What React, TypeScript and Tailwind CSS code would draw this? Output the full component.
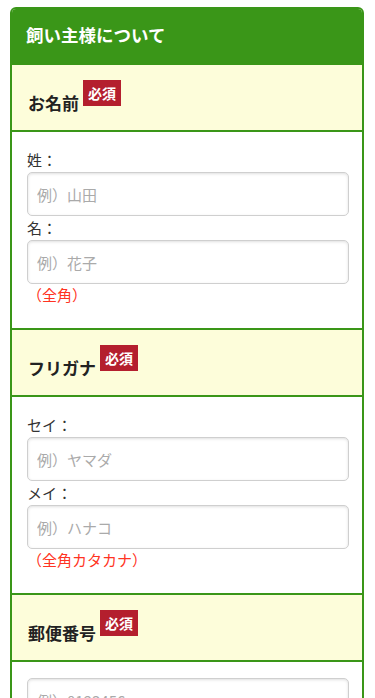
import React from "react";

const GREEN = "border-[#3a9618]";

function Badge() {
  return (
    <span className="ml-[4px] inline-block bg-[#b41f2e] px-[5px] py-[4px] text-[14px] font-bold leading-[18px] text-white">
      必須
    </span>
  );
}

function SectionHead({ title }: { title: string }) {
  return (
    <div className={`border-b-2 ${GREEN} bg-[#fdfdda] px-[16px] pb-[15px] pt-[15px]`}>
      <div className="flex items-start">
        <span className="mt-[11px] text-[17px] font-bold leading-[24px] text-[#222]">{title}</span>
        <Badge />
      </div>
    </div>
  );
}

function Field({ label, placeholder }: { label?: string; placeholder: string }) {
  return (
    <div>
      {label && <div className="text-[15px] leading-[24px] text-[#333]">{label}</div>}
      <input
        type="text"
        placeholder={placeholder}
        className="block h-[44px] w-full rounded-[5px] border border-[#cfcfcf] bg-white px-[9px] text-[15px] text-[#333] shadow-[inset_0_1px_3px_rgba(0,0,0,0.13)] outline-none placeholder:text-[#aaaaaa]"
      />
    </div>
  );
}

function Note({ text }: { text: string }) {
  return <div className="text-[15px] leading-[22px] text-[#ff3322]">{text}</div>;
}

export default function App() {
  return (
    <div className="min-h-[698px] bg-white pb-[20px] pt-[7px] font-['Noto_Sans_CJK_JP',sans-serif]">
      <div className={`ml-[10px] mr-[11px] overflow-hidden rounded-t-[6px] border-2 ${GREEN}`}>
        <div className="bg-[#3a9618] px-[14px] pb-[18px] pt-[14px] text-[17.5px] font-bold leading-[24px] text-white">
          飼い主様について
        </div>

        <SectionHead title="お名前" />
        <div className={`border-b-2 ${GREEN} bg-white pb-[22px] pl-[15px] pr-[13px] pt-[16px]`}>
          <Field label="姓：" placeholder="例）山田" />
          <Field label="名：" placeholder="例）花子" />
          <Note text="（全角）" />
        </div>

        <SectionHead title="フリガナ" />
        <div className={`border-b-2 ${GREEN} bg-white pb-[22px] pl-[15px] pr-[13px] pt-[16px]`}>
          <Field label="セイ：" placeholder="例）ヤマダ" />
          <Field label="メイ：" placeholder="例）ハナコ" />
          <Note text="（全角カタカナ）" />
        </div>

        <SectionHead title="郵便番号" />
        <div className="bg-white pb-[21px] pl-[15px] pr-[13px] pt-[16px]">
          <Field placeholder="例）0123456" />
          <Note text="（半角数字）" />
        </div>
      </div>
    </div>
  );
}
